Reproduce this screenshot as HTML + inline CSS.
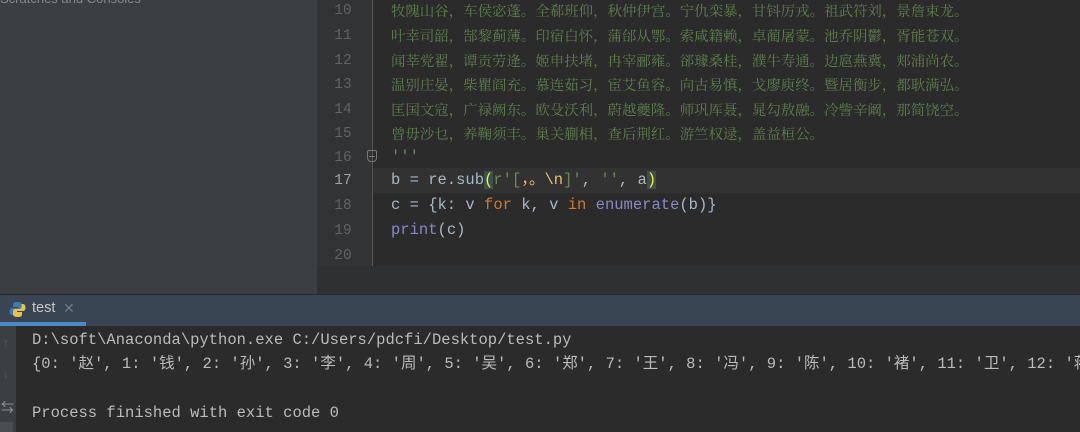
<!DOCTYPE html>
<html><head><meta charset="utf-8"><style>
*{margin:0;padding:0;box-sizing:border-box}
body{width:1080px;height:432px;overflow:hidden;background:#2b2b2b;position:relative;font-family:"Liberation Mono","Noto Sans CJK SC",monospace}
.abs{position:absolute}
#left{left:0;top:0;width:317px;height:294px;background:#3c3f41}
#gut{left:317px;top:0;width:55px;height:266px;background:#313335}
#gutline{left:372px;top:0;width:1px;height:266px;background:#555}
#ed{left:373px;top:0;width:707px;height:266px;background:#2b2b2b}
#below{left:317px;top:266px;width:763px;height:28px;background:#2f3031}
.ln{position:absolute;left:317px;width:52px;text-align:center;color:#606366;font-size:14.5px;height:25px;line-height:25px}
.cl{position:absolute;left:391px;height:25px;line-height:25px;font-size:15.5px;color:#a9b7c6;white-space:pre}
.cn{font-family:"Noto Serif CJK SC","Noto Sans CJK SC",serif;font-size:14.45px;color:#5f7f4e}
#hl{left:373px;top:168px;width:707px;height:25px;background:#323232}
#hdr{left:0;top:294px;width:1080px;height:32px;background:#3a4553;border-top:1px solid #2b2b2b}
#ul{left:0;top:322px;width:86px;height:4px;background:#4a88c7}
#strip{left:0;top:326px;width:16px;height:106px;background:#3c3f41}
.out{position:absolute;left:32px;font-size:15.5px;color:#bbbbbb;white-space:pre;height:24px;line-height:24px}
.o{color:#cc7832}.p{color:#8888c6}.s{color:#6a8759}.y{color:#e8bf6a}
</style></head><body>
<div class="abs" id="left"></div>
<div class="abs" style="left:0;top:-9px;color:#888;font-family:'Liberation Sans',sans-serif;font-size:13px">Scratches and Consoles</div>
<div class="abs" id="gut"></div>
<div class="abs" id="ed"></div>
<div class="abs" id="hl"></div>
<div class="abs" id="gutline"></div>
<div class="abs" id="below"></div>
<div class="ln" style="top:-1px">10</div>
<div class="ln" style="top:24px">11</div>
<div class="ln" style="top:49px">12</div>
<div class="ln" style="top:73px">13</div>
<div class="ln" style="top:98px">14</div>
<div class="ln" style="top:122px">15</div>
<div class="ln" style="top:146px">16</div>
<div class="ln" style="top:169px;color:#a4a3a3">17</div>
<div class="ln" style="top:194px">18</div>
<div class="ln" style="top:219px">19</div>
<div class="ln" style="top:244px">20</div>
<div class="abs" style="left:367px;top:150px;width:10px;height:12px;border:1px solid #777;border-radius:2px 2px 4px 4px"></div>
<div class="abs" style="left:369px;top:156px;width:6px;height:1px;background:#777"></div>
<div class="cl cn" style="top:-2px">牧隗山谷，车侯宓蓬。全郗班仰，秋仲伊宫。宁仇栾暴，甘钭厉戎。祖武符刘，景詹束龙。</div>
<div class="cl cn" style="top:23px">叶幸司韶，郜黎蓟薄。印宿白怀，蒲邰从鄂。索咸籍赖，卓蔺屠蒙。池乔阴鬱，胥能苍双。</div>
<div class="cl cn" style="top:48px">闻莘党翟，谭贡劳逄。姬申扶堵，冉宰郦雍。郤璩桑桂，濮牛寿通。边扈燕冀，郏浦尚农。</div>
<div class="cl cn" style="top:72px">温别庄晏，柴瞿阎充。慕连茹习，宦艾鱼容。向古易慎，戈廖庾终。暨居衡步，都耿满弘。</div>
<div class="cl cn" style="top:97px">匡国文寇，广禄阙东。欧殳沃利，蔚越夔隆。师巩厍聂，晁勾敖融。冷訾辛阚，那简饶空。</div>
<div class="cl cn" style="top:121px">曾毋沙乜，养鞠须丰。巢关蒯相，查后荆红。游竺权逯，盖益桓公。</div>
<div class="cl s" style="top:145px">'''</div>
<div class="cl" style="top:168px">b = re.sub<span style="color:#ffef28;background:#3b514d">(</span><span class="s">r'[<span class="y">，。\n</span>]'</span>, <span class="s">''</span>, a<span style="color:#ffef28;background:#3b514d">)</span></div>
<div class="cl" style="top:193px">c = {k: v <span class="o">for</span> k, v <span class="o">in</span> <span class="p">enumerate</span>(b)}</div>
<div class="cl" style="top:218px"><span class="p">print</span>(c)</div>
<div class="abs" id="hdr"></div>
<div class="abs" id="ul"></div>
<svg class="abs" style="left:9px;top:301px" width="17" height="17" viewBox="0 0 17 17"><path d="M8 1c-3 0-4 1-4 3v2h5v1H3c-2 0-2.5 2-2.5 3.5S1 14 3 14h1.5v-2.5c0-1.5 1-2.5 2.5-2.5h4c1.3 0 2-1 2-2V4c0-2-1.5-3-5-3z" fill="#3d7ab0"/><path d="M9 16c3 0 4-1 4-3v-2H8v-1h6c2 0 2.5-2 2.5-3.5S16 3 14 3h-1.5v2.5c0 1.5-1 2.5-2.5 2.5H6c-1.3 0-2 1-2 2v3c0 2 1.5 3 5 3z" fill="#e5c24a"/></svg>
<div class="abs" style="left:32px;top:300px;color:#c8c8c8;font-family:'Liberation Sans',sans-serif;font-size:14.5px">test</div>
<div class="abs" style="left:63px;top:300px;color:#707a85;font-family:'Liberation Sans',sans-serif;font-size:14px">✕</div>
<div class="abs" id="strip"></div>
<div class="abs" style="left:2px;top:336px;color:#555;font-size:13px">↑</div>
<div class="abs" style="left:2px;top:367px;color:#555;font-size:13px">↓</div>
<div class="abs" style="left:1px;top:397px;color:#999;font-size:13px">⇆</div>
<div class="abs" style="left:0;top:422px;width:13px;height:10px;background:#4b4e50"></div>
<div class="out" style="top:328px">D:\soft\Anaconda\python.exe C:/Users/pdcfi/Desktop/test.py</div>
<div class="out" style="top:352px">{0: '赵', 1: '钱', 2: '孙', 3: '李', 4: '周', 5: '吴', 6: '郑', 7: '王', 8: '冯', 9: '陈', 10: '褚', 11: '卫', 12: '蒋'</div>
<div class="out" style="top:401px">Process finished with exit code 0</div>
</body></html>
